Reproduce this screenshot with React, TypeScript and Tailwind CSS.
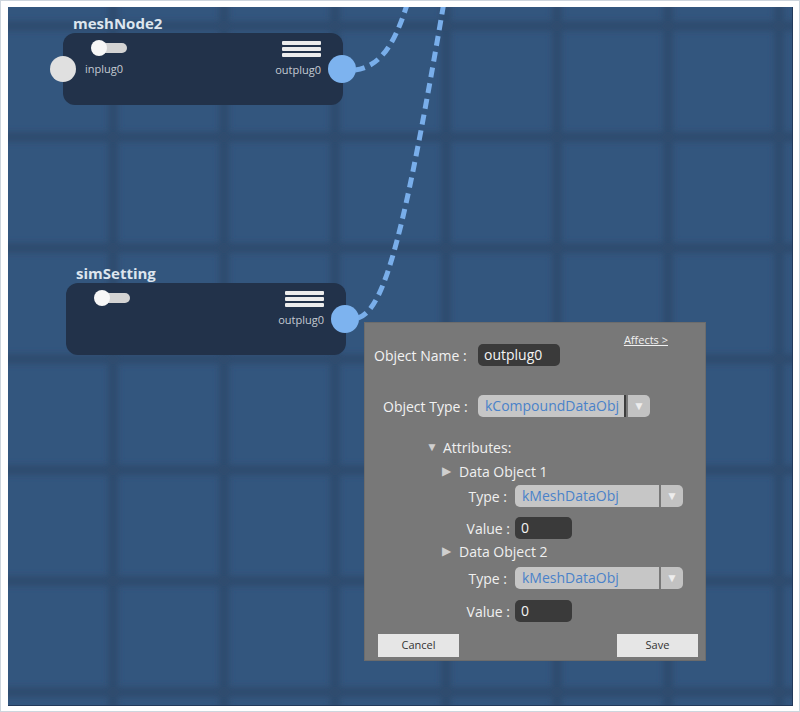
import React from 'react';

const font = { fontFamily: '"Open Sans", "Noto Sans", sans-serif' };

function Toggle() {
  return (
    <div className="relative w-[36px] h-[16px]">
      <div className="absolute left-[8px] top-[3px] w-[28px] h-[10px] rounded-full bg-[#d3d3d3]" />
      <div className="absolute left-0 top-0 w-[16px] h-[16px] rounded-full bg-[#f7f7f7]" />
    </div>
  );
}

function Hamburger() {
  return (
    <div className="flex flex-col gap-[2px] w-[39px]">
      <div className="h-[4px] rounded-[1px] bg-[#ececec]" />
      <div className="h-[4px] rounded-[1px] bg-[#ececec]" />
      <div className="h-[4px] rounded-[1px] bg-[#ececec]" />
    </div>
  );
}

function GraphNode({ title, inplug, pos }: { title: string; inplug?: boolean; pos: string }) {
  return (
    <div className={`absolute ${pos} flex flex-col`}>
      <div className="ml-[10px] h-[20px] text-[15px] leading-[20px] font-bold text-[#dde5ee]">{title}</div>
      <div className="relative w-[280px] h-[72px] rounded-[12px] bg-[#22324a] flex justify-between pt-[7px] pl-[28px] pr-[22px]">
        <div className="flex flex-col">
          <Toggle />
          {inplug && <div className="-ml-[6px] mt-[6px] text-[11px] leading-[14px] text-[#c4cad2]">inplug0</div>}
        </div>
        <div className="flex flex-col items-end pt-[1px]">
          <Hamburger />
          <div className="mt-[6px] text-[11px] leading-[14px] text-[#c4cad2]">outplug0</div>
        </div>
        {inplug && <div className="absolute left-[-13px] top-[23px] w-[26px] h-[26px] rounded-full bg-[#e0e0e0]" />}
        <div className="absolute left-[265px] top-[22px] w-[28px] h-[28px] rounded-full bg-[#7db3ef]" />
      </div>
    </div>
  );
}

function Select({ value, caret }: { value: string; caret?: boolean }) {
  return (
    <div className="flex h-[22px] flex-1 gap-[2px]">
      <div className={`flex-1 rounded-l-[5px] bg-[#c6c6c6] pl-[7px] text-[14px] leading-[22px] text-[#4a82c9] overflow-hidden whitespace-nowrap ${caret ? 'border-r-2 border-[#3d3d3d]' : ''}`}>
        {value}
      </div>
      <div className="w-[22px] rounded-r-[5px] bg-[#c2c2c2] flex items-center justify-center text-[12px] text-[#ededed]">▼</div>
    </div>
  );
}

function DarkInput({ value, w }: { value: string; w: string }) {
  return (
    <div className={`${w} h-[22px] rounded-[5px] bg-[#3a3a3a] pl-[6px] text-[14px] leading-[22px] text-[#f4f4f4]`}>{value}</div>
  );
}

function DataObject({ name, first }: { name: string; first?: boolean }) {
  return (
    <>
      <div className={`${first ? 'mt-[6px]' : 'mt-[3px]'} pl-[77px] h-[18px] flex items-center gap-[8px] text-[14px] text-[#f0f0f0]`}>
        <span className="text-[12px] text-[#cfcfcf]">▶</span>
        <span>{name}</span>
      </div>
      <div className={`${first ? 'mt-[5px]' : 'mt-[7px]'} flex items-center pr-[22px]`}>
        <div className="w-[150px] pr-[8px] text-right text-[14px] text-[#f0f0f0]">Type :</div>
        <Select value="kMeshDataObj" />
      </div>
      <div className={`${first ? 'mt-[10px]' : 'mt-[11px]'} flex items-center`}>
        <div className="w-[150px] pr-[5px] text-right text-[14px] text-[#f0f0f0]">Value :</div>
        <DarkInput value="0" w="w-[57px]" />
      </div>
    </>
  );
}

function AttributePanel() {
  return (
    <div className="absolute left-[356px] top-[315px] w-[342px] h-[339px] bg-[#787878] border border-[#6c6c6c] flex flex-col">
      <div className="pt-[10px] pl-[9px] pr-[37px] flex justify-between items-start">
        <div className="mt-[11px] flex items-center">
          <div className="w-[104px] text-[14px] text-[#f2f2f2]">Object Name :</div>
          <DarkInput value="outplug0" w="w-[82px]" />
        </div>
        <div className="text-[11px] leading-[14px] text-[#f0f0f0] underline">Affects &gt;</div>
      </div>
      <div className="mt-[29px] pl-[18px] pr-[55px] flex items-center">
        <div className="w-[95px] text-[14px] text-[#f2f2f2]">Object Type :</div>
        <Select value="kCompoundDataObj" caret />
      </div>
      <div className="mt-[21px] pl-[61px] h-[18px] flex items-center gap-[5px] text-[14px] text-[#f0f0f0]">
        <span className="text-[12px] text-[#cfcfcf]">▼</span>
        <span>Attributes:</span>
      </div>
      <DataObject name="Data Object 1" first />
      <DataObject name="Data Object 2" />
      <div className="mt-[12px] pl-[13px] pr-[7px] flex justify-between">
        <button className="w-[81px] h-[23px] bg-[#e6e6e6] text-[11px] text-[#333]">Cancel</button>
        <button className="w-[81px] h-[23px] bg-[#e6e6e6] text-[11px] text-[#333]">Save</button>
      </div>
    </div>
  );
}

function CanvasDrawing() {
  const xs = [105, 216, 327, 438, 549, 660, 771];
  const ys = [19, 130, 241, 352, 463, 574, 685];
  return (
    <svg className="absolute inset-0" width="785" height="699" viewBox="0 0 785 699">
      <defs>
        <filter id="soft" x="-10%" y="-10%" width="120%" height="120%">
          <feGaussianBlur stdDeviation="3" />
        </filter>
      </defs>
      <g filter="url(#soft)" stroke="#2f4c6e" strokeWidth="10">
        {xs.map((x) => (
          <line key={'v' + x} x1={x} y1={-10} x2={x} y2={710} />
        ))}
        {ys.map((y) => (
          <line key={'h' + y} x1={-10} y1={y} x2={795} y2={y} />
        ))}
      </g>
      <g fill="none" stroke="#79aeea" strokeWidth="5" strokeDasharray="10 6">
        <path d="M347 63 C377 59, 390 28, 402 -12" />
        <path d="M350 311 C377 303, 397 223, 436 -5" />
      </g>
    </svg>
  );
}

export default function App() {
  return (
    <div style={font} className="w-[800px] h-[712px] border border-[#cdd5dd] bg-white pt-[6px] pl-[7px] pr-[6px] pb-[5px]">
      <div className="relative w-full h-full overflow-hidden bg-[#33567e] border-r border-b border-[#22395a]">
        <CanvasDrawing />
        <GraphNode title="meshNode2" inplug pos="left-[55px] top-[6px]" />
        <GraphNode title="simSetting" pos="left-[58px] top-[256px]" />
        <AttributePanel />
      </div>
    </div>
  );
}
